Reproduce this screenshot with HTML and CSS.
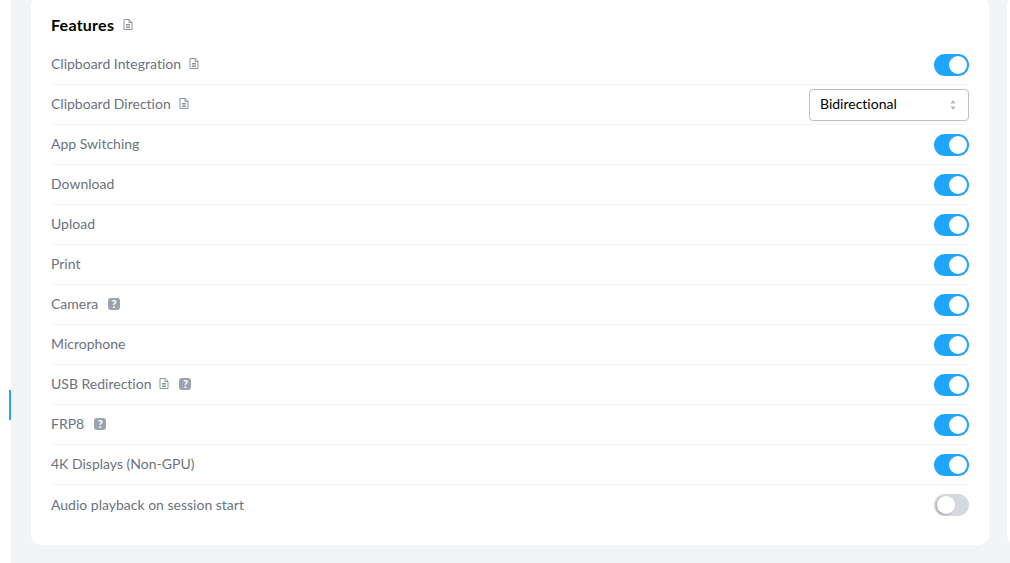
FILE: index.html
```html
<!DOCTYPE html>
<html lang="en">

<head>
    <meta charset="UTF-8">
    <meta name="viewport" content="width=device-width, initial-scale=1.0">
    <title>Features</title>
    <link rel="stylesheet" href="styles.css">
</head>

<body>
    <svg class="defs" width="0" height="0">
        <symbol id="doc" viewBox="0 0 10 11">
            <path d="M1 .5h5.2l2.8 2.8v7.2h-8z M6 .5v3h3 M3 5.5h4 M3 7h4 M3 8.5h4" fill="none" stroke="currentColor" stroke-width="1" />
        </symbol>
    </svg>

    <div class="sidebar">
        <span class="active-bar"></span>
    </div>

    <div class="main">
        <div class="card">
            <div class="card-title">
                <h2>Features</h2>
                <svg class="doc-icon"><use href="#doc" /></svg>
            </div>

            <div class="row">
                <div class="label">Clipboard Integration <svg class="doc-icon"><use href="#doc" /></svg></div>
                <span class="toggle on"></span>
            </div>
            <div class="row">
                <div class="label">Clipboard Direction <svg class="doc-icon"><use href="#doc" /></svg></div>
                <div class="select">
                    <span>Bidirectional</span>
                    <svg class="select-arrows" viewBox="0 0 6 10"><path d="M3 0l2.6 3.4h-5.2z M3 10l2.6-3.4h-5.2z" /></svg>
                </div>
            </div>
            <div class="row">
                <div class="label">App Switching</div>
                <span class="toggle on"></span>
            </div>
            <div class="row">
                <div class="label">Download</div>
                <span class="toggle on"></span>
            </div>
            <div class="row">
                <div class="label">Upload</div>
                <span class="toggle on"></span>
            </div>
            <div class="row">
                <div class="label">Print</div>
                <span class="toggle on"></span>
            </div>
            <div class="row">
                <div class="label">Camera <span class="help">?</span></div>
                <span class="toggle on"></span>
            </div>
            <div class="row">
                <div class="label">Microphone</div>
                <span class="toggle on"></span>
            </div>
            <div class="row">
                <div class="label">USB Redirection <svg class="doc-icon"><use href="#doc" /></svg> <span class="help">?</span></div>
                <span class="toggle on"></span>
            </div>
            <div class="row">
                <div class="label">FRP8 <span class="help">?</span></div>
                <span class="toggle on"></span>
            </div>
            <div class="row">
                <div class="label">4K Displays (Non-GPU)</div>
                <span class="toggle on"></span>
            </div>
            <div class="row last">
                <div class="label">Audio playback on session start</div>
                <span class="toggle"></span>
            </div>
        </div>
        <div class="card-next"></div>
    </div>
</body>

</html>
```

FILE: styles.css
```css
* {
    box-sizing: border-box;
}

html,
body {
    height: 100%;
}

body {
    display: flex;
    margin: 0;
    overflow: hidden;
    background: #fff;
    font-family: Lato, Arial, sans-serif;
    font-size: 14px;
    font-variant-ligatures: none;
}

.defs {
    display: none;
}

.sidebar {
    position: relative;
    width: 11px;
    flex-shrink: 0;
}

.active-bar {
    position: absolute;
    top: 390px;
    right: 0;
    width: 2px;
    height: 30px;
    background: #1fa5fb;
}

.main {
    display: flex;
    flex: 1;
    min-width: 0;
    align-items: flex-start;
    gap: 18px;
    height: 563px;
    padding: 0 0 0 20px;
    background: #f3f4f6;
    overflow: hidden;
}

.card {
    width: 958px;
    flex-shrink: 0;
    height: 549px;
    margin-top: -4px;
    padding: 9px 20px 0;
    background: #fff;
    border-radius: 10px;
}

.card-next {
    width: 40px;
    flex-shrink: 0;
    height: 549px;
    margin-top: -4px;
    background: #fff;
    border-radius: 10px;
}

.card-title {
    display: flex;
    align-items: center;
    gap: 9px;
    height: 40px;
    padding-bottom: 1px;
}

h2 {
    margin: 0;
    color: #000;
    font-size: 16px;
    font-weight: 700;
    letter-spacing: 0.25px;
}

.row {
    display: flex;
    align-items: center;
    justify-content: space-between;
    height: 40px;
    border-bottom: 1px solid #f3f4f6;
}

.row.last {
    border-bottom: none;
}

.row.last .label {
    padding-bottom: 1px;
}

.label {
    display: flex;
    align-items: center;
    gap: 8px;
    padding-bottom: 2px;
    color: #6b7280;
    font-size: 14px;
}

.doc-icon {
    width: 10px;
    height: 11px;
    color: #8a93a0;
}

.help {
    width: 12px;
    height: 12px;
    margin: 1px 0 0 2px;
    background: #9ca3af;
    border-radius: 3px;
    color: #fff;
    font-size: 11px;
    font-weight: 900;
    line-height: 12px;
    text-align: center;
}

.toggle {
    position: relative;
    width: 35px;
    height: 22px;
    background: #d5d9de;
    border-radius: 11px;
}

.toggle::after {
    content: "";
    position: absolute;
    top: 2px;
    left: 3px;
    width: 18px;
    height: 18px;
    background: #fff;
    border-radius: 50%;
    box-shadow: -1px 1px 2px rgba(0, 0, 0, 0.25);
}

.toggle.on {
    background: #1fa5fb;
}

.toggle.on::after {
    left: 15px;
    box-shadow: none;
}

.select {
    display: flex;
    align-items: center;
    justify-content: space-between;
    width: 160px;
    height: 32px;
    padding: 0 12px 2px 10px;
    border: 1px solid #b8c0cc;
    border-radius: 4px;
    color: #000;
    font-size: 14px;
}

.select-arrows {
    width: 6px;
    height: 10px;
    margin-top: 2px;
    fill: #b4bac4;
}
```
